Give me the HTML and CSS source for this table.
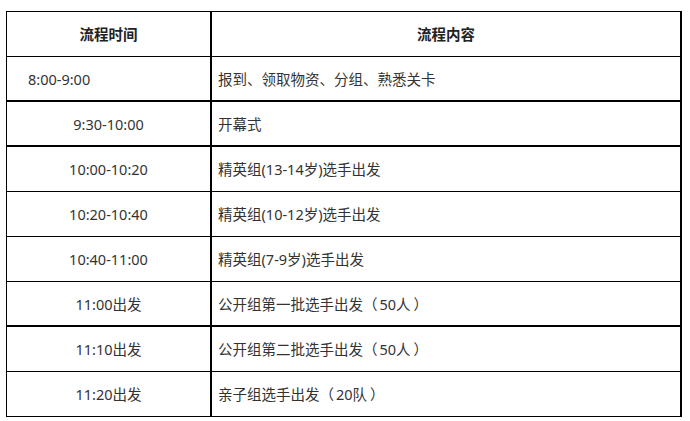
FILE: index.html
```html
<!DOCTYPE html>
<html lang="zh-CN">
<head>
<meta charset="utf-8">
<link rel="stylesheet" href="styles.css">
</head>
<body>
<table class="schedule">
  <thead>
    <tr>
      <th class="col-time">流程时间</th>
      <th class="col-content">流程内容</th>
    </tr>
  </thead>
  <tbody>
    <tr class="thick">
      <td class="time left">8:00-9:00</td>
      <td class="content">报到、领取物资、分组、熟悉关卡</td>
    </tr>
    <tr class="thick">
      <td class="time">9:30-10:00</td>
      <td class="content">开幕式</td>
    </tr>
    <tr>
      <td class="time">10:00-10:20</td>
      <td class="content">精英组(13-14岁)选手出发</td>
    </tr>
    <tr>
      <td class="time">10:20-10:40</td>
      <td class="content">精英组(10-12岁)选手出发</td>
    </tr>
    <tr>
      <td class="time">10:40-11:00</td>
      <td class="content">精英组(7-9岁)选手出发</td>
    </tr>
    <tr class="thick">
      <td class="time">11:00出发</td>
      <td class="content">公开组第一批选手出发<span class="paren-open">（</span>50人<span class="paren-close">）</span></td>
    </tr>
    <tr>
      <td class="time">11:10出发</td>
      <td class="content">公开组第二批选手出发<span class="paren-open">（</span>50人<span class="paren-close">）</span></td>
    </tr>
    <tr>
      <td class="time">11:20出发</td>
      <td class="content">亲子组选手出发<span class="paren-open">（</span>20队<span class="paren-close">）</span></td>
    </tr>
  </tbody>
</table>
</body>
</html>
```

FILE: styles.css
```css
html, body {
  margin: 0;
  padding: 0;
  background: #ffffff;
}

body {
  padding: 11px 0 0 6px;
  font-family: "Noto Sans", "Noto Sans CJK SC", sans-serif;
  font-size: 14.5px;
  color: #333333;
}

.schedule {
  border-collapse: separate;
  border-spacing: 0;
  width: 676px;
  table-layout: fixed;
  border-top: 1px solid #000;
  border-left: 1px solid #000;
}

.schedule th,
.schedule td {
  height: 45px;
  padding: 0;
  border-right: 1px solid #000;
  border-bottom: 1px solid #000;
  vertical-align: middle;
  line-height: 20px;
  box-sizing: border-box;
}

.schedule th {
  font-weight: bold;
  color: #222;
  text-align: center;
}

.schedule th.col-time {
  width: 205px;
  border-right-width: 2px;
}

.schedule th.col-content {
  border-right-width: 2px;
}

.schedule td.time {
  text-align: center;
  border-right-width: 2px;
}

.schedule td.time.left {
  text-align: left;
  padding-left: 21px;
}

.schedule td.content {
  text-align: left;
  padding-left: 6px;
  border-right-width: 2px;
}

.paren-open {
  margin-right: 2px;
}

.paren-close {
  margin-left: 3px;
}

.schedule tr.thick td {
  border-bottom-width: 2px;
}
```
